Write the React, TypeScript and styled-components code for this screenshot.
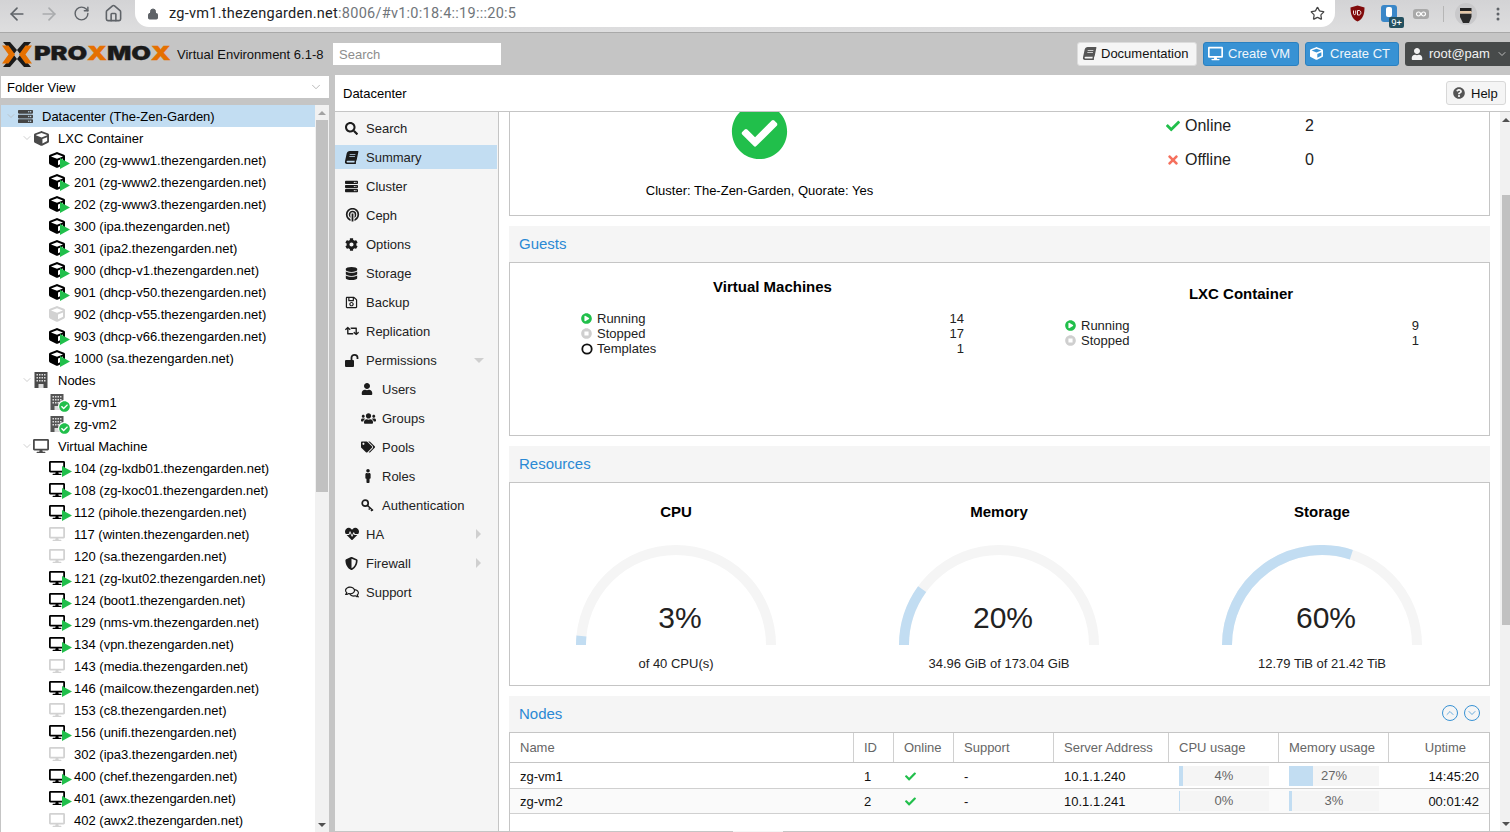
import React from "react";
import styled, { createGlobalStyle } from "styled-components";
import {
  FaSearch, FaBook, FaServer, FaCube, FaCog, FaDatabase, FaRegSave, FaRetweet, FaUser, FaUsers, FaTags,
  FaMale, FaHeartbeat, FaShieldAlt, FaRegComments, FaDesktop, FaCheck, FaTimes, FaQuestionCircle,
  FaCheckCircle, FaPlayCircle, FaStopCircle,
} from "react-icons/fa";
import { ArrowLeft, ArrowRight, RotateCw, Home, Lock, Star, ChevronDown, ChevronUp } from "lucide-react";

const Global = createGlobalStyle`
  html, body { margin: 0; padding: 0; height: 100%; overflow: hidden; background: #c5c5c5; }
  body { font-family: "Liberation Sans", Arial, sans-serif; font-size: 13px; color: #000; }
`;

const Page = styled.div`
  width: 1510px; height: 832px; display: flex; flex-direction: column; overflow: hidden;
`;

/* Browser chrome */
const BrowserBar = styled.div`
  height: 33px; flex: none; display: flex; align-items: flex-start; box-sizing: border-box;
  background: linear-gradient(#d3d3d5, #dededf); border-bottom: 1px solid #a9a9a9;
`;
const NavIcons = styled.div`
  width: 135px; height: 27px; flex: none; display: flex; align-items: center; padding-left: 1px; box-sizing: border-box; color: #5f6368;
`;
const NavSlot = styled.span<{ $dim?: boolean }>`
  width: 32px; flex: none; display: flex; justify-content: center; color: ${(p) => (p.$dim ? "#a9abad" : "#5f6368")};
`;
const Omnibox = styled.div`
  width: 1200px; height: 27px; flex: none; background: #fff; display: flex; align-items: center; padding: 0 10px 0 12px; box-sizing: border-box;
  border-radius: 0 0 14px 14px;
  font-family: "Roboto", "Liberation Sans", sans-serif; font-size: 14.5px; color: #202124;
`;
const Url = styled.span`
  margin-left: 10px; flex: 1; letter-spacing: 0.26px;
  em { font-style: normal; color: #70757a; }
`;
const Extensions = styled.div`
  flex: 1; height: 27px; display: flex; align-items: center; padding-left: 8px;
`;
const ExtSlot = styled.div<{ $w: number }>`
  width: ${(p) => p.$w}px; height: 27px; flex: none; display: flex; align-items: center; justify-content: center; position: relative;
`;
const ExtBadge = styled.span`
  position: absolute; right: 3px; bottom: -1px; background: #24505f; color: #fff; font-size: 9.5px; line-height: 11px;
  padding: 0 2px; border-radius: 2px; font-family: "Roboto", sans-serif;
`;
const ExtDivider = styled.div`
  width: 1px; height: 16px; background: #b6b6b6; margin: 0 10px 0 8px; flex: none;
`;

/* Proxmox header */
const Header = styled.div`
  height: 42px; flex: none; display: flex; align-items: center; background: #c5c5c5; padding: 0 0 0 2px; box-sizing: border-box;
`;
const Logo = styled.div`
  display: flex; align-items: center; width: 169px; flex: none; height: 26px;
`;
const LogoMark = styled.svg`
  flex: none; margin-right: 2px;
`;
const LogoText = styled.span`
  display: inline-flex; transform: scaleX(1.34); transform-origin: left center; white-space: nowrap;
`;
const LogoWord = styled.span<{ $o?: boolean }>`
  font-family: "Inter", "Liberation Sans", sans-serif; font-weight: 900; font-size: 19px; line-height: 26px; letter-spacing: -0.1px;
  color: ${(p) => (p.$o ? "#e57000" : "#1a1a1a")};
  -webkit-text-stroke: 0.3px currentColor;
`;
const Version = styled.span`
  margin-left: 6px; width: 156px; flex: none; white-space: nowrap; font-size: 13px; color: #111;
`;
const SearchInput = styled.div`
  width: 168px; height: 22px; background: #fff; box-sizing: border-box; padding: 0 6px; display: flex; align-items: center; color: #8d8d8d; font-size: 13px; flex: none;
`;
const HeaderRight = styled.div`
  margin-left: auto; display: flex; align-items: center; gap: 6px;
`;
const DocButton = styled.div`
  height: 24px; width: 120px; box-sizing: border-box; background: #f5f5f5; border: 1px solid #dcdcdc; border-radius: 3px;
  display: flex; align-items: center; gap: 5px; padding: 0 0 1px 5px; font-size: 13px; color: #111; svg { color: #555; }
`;
const BlueButton = styled.div<{ $w: number; $gap: number }>`
  height: 24px; width: ${(p) => p.$w}px; box-sizing: border-box; background: #3892d4; border: 1px solid #2a80c0; border-radius: 3px;
  display: flex; align-items: center; gap: ${(p) => p.$gap}px; padding: 0 0 1px 4px; font-size: 13px; color: #f0f6fb; svg { color: #fff; }
`;
const UserButton = styled.div`
  height: 24px; width: 105px; box-sizing: border-box; background: #474a4a; border-radius: 3px 0 0 3px;
  display: flex; align-items: center; padding: 0 0 1px 6px; gap: 6px; font-size: 13px; color: #f2f2f2;
`;
const SlantBook = styled(FaBook)`
  transform: skewX(-12deg);
`;

/* Work area */
const Work = styled.div`
  flex: 1; min-height: 0; display: flex;
`;
const LeftColumn = styled.div`
  width: 335px; flex: none; box-sizing: border-box; padding: 1px 6px 0 1px; display: flex; flex-direction: column;
`;
const ViewCombo = styled.div`
  height: 22px; flex: none; background: #fff; display: flex; align-items: center; justify-content: space-between; padding: 0 6px; box-sizing: border-box; font-size: 13px; margin-bottom: 7px;
`;
const TreePanel = styled.div`
  flex: 1; min-height: 0; background: #fff; display: flex; overflow: hidden;
`;
const TreeList = styled.div`
  flex: 1; min-width: 0; overflow: hidden;
`;
const TreeRow = styled.div<{ $level: number; $selected?: boolean }>`
  height: 22px; display: flex; align-items: center; box-sizing: border-box; padding-left: ${(p) => p.$level * 16 + 4}px;
  background: ${(p) => (p.$selected ? "#c2ddf2" : "transparent")}; white-space: nowrap;
`;
const Twisty = styled.span`
  width: 12px; flex: none; display: flex; align-items: center; color: #b5b5b5;
`;
const TreeIconBox = styled.span`
  width: 25px; height: 16px; flex: none; position: relative; display: block;
`;
const TreeGlyph = styled.span<{ $c: string }>`
  display: flex; width: 16px; height: 16px; align-items: center; justify-content: center; color: ${(p) => p.$c};
`;
const Overlay = styled.svg<{ $left: number }>`
  position: absolute; left: ${(p) => p.$left}px; top: 6px; color: #21bf4b;
`;
const NodeBadge = styled.span`
  position: absolute; left: 9px; top: 6px; width: 12px; height: 12px; border-radius: 50%; background: #fff; display: flex; align-items: center; justify-content: center; color: #21bf4b;
`;
const ScrollTrack = styled.div<{ $w: number }>`
  width: ${(p) => p.$w}px; flex: none; background: #f1f1f1; display: flex; flex-direction: column; align-items: center; box-sizing: border-box; padding: 0 1px;
`;
const ArrowCell = styled.div<{ $up?: boolean; $dark?: boolean }>`
  height: 15px; flex: none; display: flex; align-items: center; justify-content: center; width: 100%;
  &::before { content: ""; border-left: 4px solid transparent; border-right: 4px solid transparent;
    ${(p) => (p.$up ? `border-bottom: 4px solid ${p.$dark ? "#505050" : "#a3a3a3"};` : "border-top: 4px solid #505050;")} }
`;
const ScrollThumb = styled.div<{ $h: number; $mt?: number }>`
  width: 100%; height: ${(p) => p.$h}px; flex: none; background: #c1c1c1; margin-top: ${(p) => p.$mt ?? 0}px;
`;
const ScrollSpacer = styled.div`
  flex: 1;
`;

const RightColumn = styled.div`
  flex: 1; min-width: 0; display: flex; flex-direction: column; background: #fff; position: relative;
`;
const TitleBar = styled.div`
  height: 37px; flex: none; box-sizing: border-box; border-bottom: 1px solid #c5c5c5; display: flex; align-items: center; justify-content: space-between; padding: 0 4px 0 8px; font-size: 13px;
`;
const HelpButton = styled.div`
  width: 60px; height: 24px; box-sizing: border-box; border: 1px solid #d8d8d8; border-radius: 3px; background: #f5f5f5; display: flex; align-items: center; gap: 6px; padding-left: 6px; color: #111; svg { color: #555; }
`;
const Body = styled.div`
  flex: 1; min-height: 0; display: flex; overflow: hidden; box-sizing: border-box; border-bottom: 1px solid #c5c5c5;
`;
const BottomNotch = styled.div`
  position: absolute; left: 398px; bottom: 0; width: 50px; height: 1px; background: #f5f5f5;
`;
const SideMenu = styled.div`
  width: 164px; flex: none; box-sizing: border-box; background: #f5f5f5; border-right: 1px solid #c5c5c5; padding: 4px 1px 0 0; display: flex; flex-direction: column; gap: 5px;
`;
const MenuItem = styled.div<{ $active?: boolean; $sub?: boolean }>`
  height: 24px; flex: none; display: flex; align-items: center; padding-left: ${(p) => (p.$sub ? 26 : 10)}px;
  background: ${(p) => (p.$active ? "#c2ddf2" : "transparent")}; color: #222; font-size: 13px;
`;
const MenuIcon = styled.span`
  width: 21px; flex: none; display: flex; align-items: center; color: #1c1c1c;
`;
const MenuLabel = styled.span`
  flex: 1;
`;
const MenuCaret = styled.span<{ $down?: boolean }>`
  width: 0; height: 0; margin-right: ${(p) => (p.$down ? 13 : 16)}px;
  ${(p) => p.$down
    ? "border-left: 5px solid transparent; border-right: 5px solid transparent; border-top: 5px solid #cfcfcf;"
    : "border-top: 5px solid transparent; border-bottom: 5px solid transparent; border-left: 5px solid #cfcfcf;"}
`;
const Content = styled.div`
  flex: 1; min-width: 0; display: flex; flex-direction: column; padding: 0 10px 0 10px; gap: 10px; overflow: hidden;
`;
const StatusPanel = styled.div`
  height: 104px; flex: none; box-sizing: border-box; border: 1px solid #c5c5c5; border-top: 0; display: flex; overflow: hidden;
`;
const StatusLeft = styled.div`
  width: 499px; flex: none; display: flex; flex-direction: column; align-items: center;
  svg { margin-top: -9px; color: #21bf4b; flex: none; }
`;
const QuorumText = styled.div`
  margin-top: 23px; font-size: 13px;
`;
const StatusRight = styled.div`
  display: flex; flex-direction: column; padding: 4px 0 0 156px; gap: 14px;
`;
const StatusRow = styled.div`
  display: flex; align-items: center; height: 20px; font-size: 16px; color: #222;
`;
const StatusIcon = styled.span<{ $c: string }>`
  width: 20px; flex: none; display: flex; justify-content: center; color: ${(p) => p.$c}; padding-right: 4px; box-sizing: border-box;
`;
const StatusName = styled.span`
  width: 120px; flex: none;
`;
const Panel = styled.div`
  flex: none; display: flex; flex-direction: column;
`;
const PanelHeader = styled.div`
  height: 36px; flex: none; box-sizing: border-box; background: #f5f5f5; display: flex; align-items: center; justify-content: space-between; padding: 0 10px 2px 10px; color: #2a89d4; font-size: 15px;
`;
const PanelTools = styled.div`
  display: flex; gap: 6px; color: #3892d4;
`;
const RoundTool = styled.span`
  width: 16px; height: 16px; box-sizing: border-box; border-radius: 50%; border: 1px solid #3892d4; display: flex; align-items: center; justify-content: center; flex: none;
`;
const GuestsBody = styled.div`
  height: 174px; box-sizing: border-box; border: 1px solid #c5c5c5; display: flex; flex: none;
`;
const GuestCol = styled.div<{ $w: number; $pt: number; $pl: number; $pr: number }>`
  width: ${(p) => p.$w}px; flex: none; box-sizing: border-box; padding: ${(p) => p.$pt}px ${(p) => p.$pr}px 0 ${(p) => p.$pl}px; display: flex; flex-direction: column;
`;
const GuestTitle = styled.div<{ $shift: number }>`
  text-align: center; font-weight: bold; font-size: 15px; line-height: 17px; margin-bottom: 16px; padding-right: ${(p) => p.$shift}px;
`;
const GuestRow = styled.div`
  height: 15px; display: flex; align-items: center; font-size: 13px; color: #222;
`;
const GuestIcon = styled.span<{ $c: string }>`
  width: 16px; flex: none; display: flex; color: ${(p) => p.$c};
`;
const GuestName = styled.span`
  flex: 1;
`;
const ResourcesBody = styled.div`
  height: 204px; box-sizing: border-box; border: 1px solid #c5c5c5; display: grid; grid-template-columns: repeat(3, 323px); padding: 0 5px; flex: none;
`;
const Resource = styled.div`
  display: flex; flex-direction: column; align-items: center; padding: 20px 1px 0 0;
`;
const ResourceTitle = styled.div`
  font-weight: bold; font-size: 15px; line-height: 17px; margin-bottom: 25px;
`;
const GaugeBox = styled.div`
  width: 200px; height: 100px; position: relative; flex: none;
`;
const GaugeValue = styled.div`
  position: absolute; left: 8px; right: 0; top: 56px; text-align: center; font-size: 30px; line-height: 34px; color: #222;
`;
const ResourceText = styled.div`
  margin-top: 11px; font-size: 13px; color: #222;
`;
const GRID = "344px 40px 60px 100px 115px 110px 110px 99px";
const TableWrap = styled.div`
  border: 1px solid #c5c5c5; border-bottom: 0; height: 99px; box-sizing: border-box; flex: none;
`;
const HeadRow = styled.div`
  display: grid; grid-template-columns: ${GRID}; height: 30px; box-sizing: border-box; border-bottom: 1px solid #c5c5c5;
`;
const HeadCell = styled.div<{ $end?: boolean }>`
  display: flex; align-items: center; padding-left: 10px; box-sizing: border-box; color: #666; font-size: 13px;
  border-right: 1px solid #d0d0d0; ${(p) => p.$end && "justify-content: flex-end; padding: 0 22px 0 0; border-right: 0;"}
`;
const DataRow = styled.div<{ $alt?: boolean; $h: number; $pt?: number }>`
  display: grid; grid-template-columns: ${GRID}; height: ${(p) => p.$h}px; box-sizing: border-box; border-bottom: 1px solid #d0d0d0;
  padding-top: ${(p) => p.$pt ?? 0}px;
  background: ${(p) => (p.$alt ? "#fafafa" : "#fff")};
`;
const DataCell = styled.div<{ $right?: boolean }>`
  display: flex; align-items: center; padding: 0 ${(p) => (p.$right ? 9 : 10)}px 0 10px; box-sizing: border-box; font-size: 13px; color: #111;
  ${(p) => p.$right && "justify-content: flex-end;"}
`;
const CheckCell = styled(DataCell)`
  color: #21bf4b; padding-left: 11px;
`;
const Bar = styled.div`
  width: 90px; height: 20px; background: #f5f5f5; position: relative; display: flex; align-items: center; justify-content: center; color: #666; font-size: 13px;
`;
const BarFill = styled.div`
  position: absolute; left: 0; top: 0; bottom: 0; background: #c2ddf2;
`;
const BarLabel = styled.span`
  position: relative; top: -1px;
`;
const ContentScroll = styled(ScrollTrack)`
  background: #f1f1f1; padding: 0 0 0 2px;
`;

type Kind = "ct" | "ctoff" | "vm" | "vmoff";
const CTS: [string, boolean][] = [
  ["200 (zg-www1.thezengarden.net)", true], ["201 (zg-www2.thezengarden.net)", true], ["202 (zg-www3.thezengarden.net)", true],
  ["300 (ipa.thezengarden.net)", true], ["301 (ipa2.thezengarden.net)", true], ["900 (dhcp-v1.thezengarden.net)", true],
  ["901 (dhcp-v50.thezengarden.net)", true], ["902 (dhcp-v55.thezengarden.net)", false], ["903 (dhcp-v66.thezengarden.net)", true],
  ["1000 (sa.thezengarden.net)", true],
];
const VMS: [string, boolean][] = [
  ["104 (zg-lxdb01.thezengarden.net)", true], ["108 (zg-lxoc01.thezengarden.net)", true], ["112 (pihole.thezengarden.net)", true],
  ["117 (winten.thezengarden.net)", false], ["120 (sa.thezengarden.net)", false], ["121 (zg-lxut02.thezengarden.net)", true],
  ["124 (boot1.thezengarden.net)", true], ["129 (nms-vm.thezengarden.net)", true], ["134 (vpn.thezengarden.net)", true],
  ["143 (media.thezengarden.net)", false], ["146 (mailcow.thezengarden.net)", true], ["153 (c8.thezengarden.net)", false],
  ["156 (unifi.thezengarden.net)", true], ["302 (ipa3.thezengarden.net)", false], ["400 (chef.thezengarden.net)", true],
  ["401 (awx.thezengarden.net)", true], ["402 (awx2.thezengarden.net)", false],
];

const TwistyIcon = () => (
  <Twisty>
    <ChevronDown size={12} strokeWidth={1.3} />
  </Twisty>
);

const BuildingIcon = () => (
  <svg width="14" height="16" viewBox="0 0 14 16">
    <rect x="0.5" y="0" width="13" height="16" fill="currentColor" />
    {[2, 5, 8].flatMap((y) =>
      [2.5, 5, 7.5, 10].map((x) => <rect key={`${x}-${y}`} x={x} y={y} width="1.5" height="1.5" fill="#dcdcdc" />)
    )}
    <rect x="4.5" y="12" width="5" height="4" fill="#dcdcdc" />
  </svg>
);

function GuestTreeRow({ label, kind }: { label: string; kind: Kind }) {
  const running = kind === "ct" || kind === "vm";
  const isCt = kind === "ct" || kind === "ctoff";
  return (
    <TreeRow $level={2}>
      <Twisty />
      <TreeIconBox>
        <TreeGlyph $c={running ? "#000" : "#d2d2d2"}>
          {isCt ? <FaCube size={16} /> : <FaDesktop size={16} />}
        </TreeGlyph>
        {running && (
          <Overlay $left={isCt ? 11 : 13} width="10" height="11" viewBox="0 0 10 11">
            <path d="M0 0L10 5.5L0 11Z" fill="currentColor" />
          </Overlay>
        )}
      </TreeIconBox>
      {label}
    </TreeRow>
  );
}

const GroupRow = ({ label, icon }: { label: string; icon: React.ReactNode }) => (
  <TreeRow $level={1}>
    <TwistyIcon />
    <TreeIconBox>
      <TreeGlyph $c="#4a4a4a">{icon}</TreeGlyph>
    </TreeIconBox>
    {label}
  </TreeRow>
);

const NodeRow = ({ label }: { label: string }) => (
  <TreeRow $level={2}>
    <Twisty />
    <TreeIconBox>
      <TreeGlyph $c="#555">
        <BuildingIcon />
      </TreeGlyph>
      <NodeBadge>
        <FaCheckCircle size={11} />
      </NodeBadge>
    </TreeIconBox>
    {label}
  </TreeRow>
);

const CephIcon = () => (
  <svg width="15" height="15" viewBox="0 0 15 15" fill="none" stroke="currentColor">
    <circle cx="7.5" cy="6.5" r="5.8" strokeWidth="1.7" />
    <circle cx="7.5" cy="6.5" r="3" strokeWidth="1.5" />
    <path d="M7.5 7v8" strokeWidth="4" stroke="#f5f5f5" />
    <path d="M7.5 5.5v8" strokeWidth="1.8" />
  </svg>
);
const OpenLockIcon = () => (
  <svg width="14" height="13" viewBox="0 0 14 13" fill="currentColor">
    <rect x="0" y="6" width="9" height="7" rx="1" />
    <path d="M6.5 6V3.6C6.5 2 7.7.9 9.5.9S12.5 2 12.5 3.6V5" fill="none" stroke="currentColor" strokeWidth="1.8" />
  </svg>
);
const OutlineKeyIcon = () => (
  <svg width="13" height="13" viewBox="0 0 13 13" fill="none" stroke="currentColor">
    <circle cx="4.2" cy="4.2" r="3" strokeWidth="1.7" />
    <path d="M6.5 6.5L12 11.5M9.2 9l-1.5 1.5M11.2 10.8l-1.2 1.2" strokeWidth="1.5" />
  </svg>
);

const MENU: { label: string; icon: React.ReactNode; active?: boolean; sub?: boolean; caret?: "down" | "right" }[] = [
  { label: "Search", icon: <FaSearch size={13} /> },
  { label: "Summary", icon: <SlantBook size={13} />, active: true },
  { label: "Cluster", icon: <FaServer size={13} /> },
  { label: "Ceph", icon: <CephIcon /> },
  { label: "Options", icon: <FaCog size={13} /> },
  { label: "Storage", icon: <FaDatabase size={13} /> },
  { label: "Backup", icon: <FaRegSave size={13} /> },
  { label: "Replication", icon: <FaRetweet size={14} /> },
  { label: "Permissions", icon: <OpenLockIcon />, caret: "down" },
  { label: "Users", icon: <FaUser size={12} />, sub: true },
  { label: "Groups", icon: <FaUsers size={15} />, sub: true },
  { label: "Pools", icon: <FaTags size={14} />, sub: true },
  { label: "Roles", icon: <FaMale size={14} />, sub: true },
  { label: "Authentication", icon: <OutlineKeyIcon />, sub: true },
  { label: "HA", icon: <FaHeartbeat size={14} />, caret: "right" },
  { label: "Firewall", icon: <FaShieldAlt size={13} />, caret: "right" },
  { label: "Support", icon: <FaRegComments size={14} /> },
];

function Gauge({ pct }: { pct: number }) {
  const r = 95;
  const a = Math.PI * (1 - pct / 100);
  const x = 100 + r * Math.cos(a);
  const y = 100 - r * Math.sin(a);
  return (
    <GaugeBox>
      <svg width="200" height="100" viewBox="0 0 200 100">
        <path d="M5 100 A95 95 0 0 1 195 100" fill="none" stroke="#f5f5f5" strokeWidth="10" />
        <path d={`M5 100 A95 95 0 0 1 ${x} ${y}`} fill="none" stroke="#c2ddf2" strokeWidth="10" />
      </svg>
      <GaugeValue>{pct}%</GaugeValue>
    </GaugeBox>
  );
}

const GuestStat = ({ state, name, value }: { state: "run" | "stop" | "tpl"; name: string; value: number }) => (
  <GuestRow>
    <GuestIcon $c={state === "run" ? "#21bf4b" : state === "stop" ? "#cfcfcf" : "#111"}>
      {state === "run" ? (
        <FaPlayCircle size={11} />
      ) : state === "stop" ? (
        <FaStopCircle size={11} />
      ) : (
        <svg width="12" height="12" viewBox="0 0 12 12">
          <circle cx="6" cy="6" r="4.7" fill="none" stroke="currentColor" strokeWidth="1.8" />
        </svg>
      )}
    </GuestIcon>
    <GuestName>{name}</GuestName>
    {value}
  </GuestRow>
);

const Usage = ({ pct, fill }: { pct: number; fill: number }) => (
  <DataCell>
    <Bar>
      <BarFill style={{ width: `${fill}%` }} />
      <BarLabel>{pct}%</BarLabel>
    </Bar>
  </DataCell>
);

export default function App() {
  return (
    <Page>
      <Global />
      <BrowserBar>
        <NavIcons>
          <NavSlot><ArrowLeft size={20} /></NavSlot>
          <NavSlot $dim><ArrowRight size={20} /></NavSlot>
          <NavSlot><RotateCw size={17} /></NavSlot>
          <NavSlot><Home size={19} /></NavSlot>
        </NavIcons>
        <Omnibox>
          <Lock size={12} fill="#5f6368" color="#5f6368" />
          <Url>
            zg-vm1.thezengarden.net<em>:8006/#v1:0:18:4::19:::20:5</em>
          </Url>
          <Star size={15} color="#444" />
        </Omnibox>
        <Extensions>
          <ExtSlot $w={28}>
            <svg width="15" height="17" viewBox="0 0 15 17">
              <path d="M7.5 0.5L14.5 2.5C14.5 9 13 14 7.5 16.5C2 14 0.5 9 0.5 2.5Z" fill="#800a0a" />
              <path d="M3.5 5.5v3c0 1.5 2.2 1.5 2.2 0v-3M7.5 5.5v4.5h1.5c2.5 0 2.5-4.5 0-4.5Z" fill="none" stroke="#fff" strokeWidth="0.9" />
            </svg>
          </ExtSlot>
          <ExtSlot $w={36}>
            <svg width="16" height="17" viewBox="0 0 16 17">
              <rect width="16" height="17" rx="3" fill="#3a87c8" />
              <rect x="5" y="2" width="6" height="10" rx="2" fill="#fff" />
            </svg>
            <ExtBadge>9+</ExtBadge>
          </ExtSlot>
          <ExtSlot $w={28}>
            <svg width="16" height="10" viewBox="0 0 16 10">
              <rect width="16" height="10" rx="3" fill="#a9a9a9" />
              <circle cx="5.5" cy="5" r="2" fill="none" stroke="#fff" strokeWidth="1.2" />
              <circle cx="10.5" cy="5" r="2" fill="none" stroke="#fff" strokeWidth="1.2" />
            </svg>
          </ExtSlot>
          <ExtDivider />
          <ExtSlot $w={24}>
            <svg width="22" height="22" viewBox="0 0 22 22">
              <circle cx="11" cy="11" r="11" fill="#c9c9cb" />
              <path d="M5 5h11.5v4H5z" fill="#222" />
              <path d="M5 10.5h11.5V14L14 20H8L5 14Z" fill="#2b2b2b" />
              <rect x="5" y="8" width="11.5" height="2.5" fill="#e6c8a8" />
            </svg>
          </ExtSlot>
          <ExtSlot $w={40}>
            <svg width="4" height="16" viewBox="0 0 4 16" fill="#5f6368">
              <circle cx="2" cy="3" r="1.5" />
              <circle cx="2" cy="8" r="1.5" />
              <circle cx="2" cy="13" r="1.5" />
            </svg>
          </ExtSlot>
        </Extensions>
      </BrowserBar>
      <Header>
        <Logo>
          <LogoMark width="30" height="25" viewBox="0 0 30 25">
            <path d="M1 0h7l7 8-3.5 4.5Z M29 0h-7l-7 8 3.5 4.5Z" fill="#1a1a1a" />
            <path d="M1 25h7l7-8-3.5-4.5Z M29 25h-7l-7-8 3.5-4.5Z" fill="#1a1a1a" />
            <path d="M0 3.5h6.5L13 12.5 6.5 21.5H0L6.5 12.5Z M30 3.5h-6.5L17 12.5l6.5 9H30L23.5 12.5Z" fill="#e57000" />
          </LogoMark>
          <LogoText>
            <LogoWord>PRO</LogoWord>
            <LogoWord $o>X</LogoWord>
            <LogoWord>MO</LogoWord>
            <LogoWord $o>X</LogoWord>
          </LogoText>
        </Logo>
        <Version>Virtual Environment 6.1-8</Version>
        <SearchInput>Search</SearchInput>
        <HeaderRight>
          <DocButton>
            <SlantBook size={13} />
            Documentation
          </DocButton>
          <BlueButton $w={96} $gap={5}>
            <FaDesktop size={15} />
            Create VM
          </BlueButton>
          <BlueButton $w={94} $gap={7}>
            <FaCube size={13} />
            Create CT
          </BlueButton>
          <UserButton>
            <FaUser size={12} />
            root@pam
            <ChevronDown size={12} color="#bbb" />
          </UserButton>
        </HeaderRight>
      </Header>
      <Work>
        <LeftColumn>
          <ViewCombo>
            Folder View
            <ChevronDown size={14} color="#aaa" strokeWidth={1.4} />
          </ViewCombo>
          <TreePanel>
            <TreeList>
              <TreeRow $level={0} $selected>
                <TwistyIcon />
                <TreeIconBox>
                  <TreeGlyph $c="#444">
                    <FaServer size={15} />
                  </TreeGlyph>
                </TreeIconBox>
                Datacenter (The-Zen-Garden)
              </TreeRow>
              <GroupRow label="LXC Container" icon={<FaCube size={15} />} />
              {CTS.map(([l, r]) => (
                <GuestTreeRow key={l} label={l} kind={r ? "ct" : "ctoff"} />
              ))}
              <GroupRow label="Nodes" icon={<BuildingIcon />} />
              <NodeRow label="zg-vm1" />
              <NodeRow label="zg-vm2" />
              <GroupRow label="Virtual Machine" icon={<FaDesktop size={16} />} />
              {VMS.map(([l, r]) => (
                <GuestTreeRow key={l} label={l} kind={r ? "vm" : "vmoff"} />
              ))}
            </TreeList>
            <ScrollTrack $w={14}>
              <ArrowCell $up />
              <ScrollThumb $h={372} />
              <ScrollSpacer />
              <ArrowCell />
            </ScrollTrack>
          </TreePanel>
        </LeftColumn>
        <RightColumn>
          <TitleBar>
            Datacenter
            <HelpButton>
              <FaQuestionCircle size={12} />
              Help
            </HelpButton>
          </TitleBar>
          <Body>
            <SideMenu>
              {MENU.map((m) => (
                <MenuItem key={m.label} $active={m.active} $sub={m.sub}>
                  <MenuIcon>{m.icon}</MenuIcon>
                  <MenuLabel>{m.label}</MenuLabel>
                  {m.caret && <MenuCaret $down={m.caret === "down"} />}
                </MenuItem>
              ))}
            </SideMenu>
            <Content>
              <StatusPanel>
                <StatusLeft>
                  <FaCheckCircle size={57} />
                  <QuorumText>Cluster: The-Zen-Garden, Quorate: Yes</QuorumText>
                </StatusLeft>
                <StatusRight>
                  <StatusRow>
                    <StatusIcon $c="#21bf4b"><FaCheck size={14} /></StatusIcon>
                    <StatusName>Online</StatusName>2
                  </StatusRow>
                  <StatusRow>
                    <StatusIcon $c="#f5705d"><FaTimes size={14} /></StatusIcon>
                    <StatusName>Offline</StatusName>0
                  </StatusRow>
                </StatusRight>
              </StatusPanel>
              <Panel>
                <PanelHeader>Guests</PanelHeader>
                <GuestsBody>
                  <GuestCol $w={490} $pt={15} $pl={71} $pr={36}>
                    <GuestTitle $shift={0}>Virtual Machines</GuestTitle>
                    <GuestStat state="run" name="Running" value={14} />
                    <GuestStat state="stop" name="Stopped" value={17} />
                    <GuestStat state="tpl" name="Templates" value={1} />
                  </GuestCol>
                  <GuestCol $w={489} $pt={22} $pl={65} $pr={70}>
                    <GuestTitle $shift={2}>LXC Container</GuestTitle>
                    <GuestStat state="run" name="Running" value={9} />
                    <GuestStat state="stop" name="Stopped" value={1} />
                  </GuestCol>
                </GuestsBody>
              </Panel>
              <Panel>
                <PanelHeader>Resources</PanelHeader>
                <ResourcesBody>
                  <Resource>
                    <ResourceTitle>CPU</ResourceTitle>
                    <Gauge pct={3} />
                    <ResourceText>of 40 CPU(s)</ResourceText>
                  </Resource>
                  <Resource>
                    <ResourceTitle>Memory</ResourceTitle>
                    <Gauge pct={20} />
                    <ResourceText>34.96 GiB of 173.04 GiB</ResourceText>
                  </Resource>
                  <Resource>
                    <ResourceTitle>Storage</ResourceTitle>
                    <Gauge pct={60} />
                    <ResourceText>12.79 TiB of 21.42 TiB</ResourceText>
                  </Resource>
                </ResourcesBody>
              </Panel>
              <Panel>
                <PanelHeader>
                  Nodes
                  <PanelTools>
                    <RoundTool><ChevronUp size={12} strokeWidth={1.5} /></RoundTool>
                    <RoundTool><ChevronDown size={12} strokeWidth={1.5} /></RoundTool>
                  </PanelTools>
                </PanelHeader>
                <TableWrap>
                  <HeadRow>
                    <HeadCell>Name</HeadCell>
                    <HeadCell>ID</HeadCell>
                    <HeadCell>Online</HeadCell>
                    <HeadCell>Support</HeadCell>
                    <HeadCell>Server Address</HeadCell>
                    <HeadCell>CPU usage</HeadCell>
                    <HeadCell>Memory usage</HeadCell>
                    <HeadCell $end>Uptime</HeadCell>
                  </HeadRow>
                  <DataRow $h={26} $pt={1}>
                    <DataCell>zg-vm1</DataCell>
                    <DataCell>1</DataCell>
                    <CheckCell><FaCheck size={11} /></CheckCell>
                    <DataCell>-</DataCell>
                    <DataCell>10.1.1.240</DataCell>
                    <Usage pct={4} fill={4.4} />
                    <Usage pct={27} fill={27} />
                    <DataCell $right>14:45:20</DataCell>
                  </DataRow>
                  <DataRow $h={25} $alt>
                    <DataCell>zg-vm2</DataCell>
                    <DataCell>2</DataCell>
                    <CheckCell><FaCheck size={11} /></CheckCell>
                    <DataCell>-</DataCell>
                    <DataCell>10.1.1.241</DataCell>
                    <Usage pct={0} fill={1} />
                    <Usage pct={3} fill={3.3} />
                    <DataCell $right>00:01:42</DataCell>
                  </DataRow>
                </TableWrap>
              </Panel>
            </Content>
            <ContentScroll $w={10}>
              <ArrowCell $up $dark />
              <ScrollThumb $h={430} $mt={68} />
              <ScrollSpacer />
              <ArrowCell />
            </ContentScroll>
          </Body>
          <BottomNotch />
        </RightColumn>
      </Work>
    </Page>
  );
}
